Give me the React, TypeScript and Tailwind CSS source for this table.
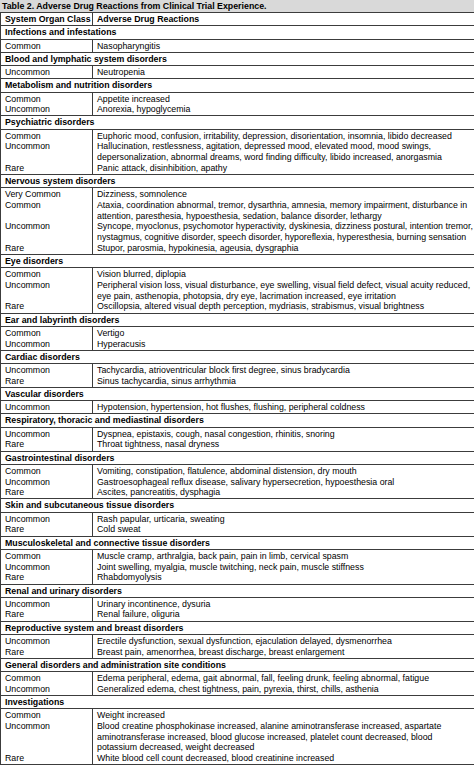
type Group = { freq: string; lines: string[] }
type Section = { title: string; groups: Group[] }

const sections: Section[] = [
  { title: "Infections and infestations", groups: [{ freq: "Common", lines: ["Nasopharyngitis"] }] },
  { title: "Blood and lymphatic system disorders", groups: [{ freq: "Uncommon", lines: ["Neutropenia"] }] },
  {
    title: "Metabolism and nutrition disorders",
    groups: [
      { freq: "Common", lines: ["Appetite increased"] },
      { freq: "Uncommon", lines: ["Anorexia, hypoglycemia"] },
    ],
  },
  {
    title: "Psychiatric disorders",
    groups: [
      { freq: "Common", lines: ["Euphoric mood, confusion, irritability, depression, disorientation, insomnia, libido decreased"] },
      {
        freq: "Uncommon",
        lines: [
          "Hallucination, restlessness, agitation, depressed mood, elevated mood, mood swings,",
          "depersonalization, abnormal dreams, word finding difficulty, libido increased, anorgasmia",
        ],
      },
      { freq: "Rare", lines: ["Panic attack, disinhibition, apathy"] },
    ],
  },
  {
    title: "Nervous system disorders",
    groups: [
      { freq: "Very Common", lines: ["Dizziness, somnolence"] },
      {
        freq: "Common",
        lines: [
          "Ataxia, coordination abnormal, tremor, dysarthria, amnesia, memory impairment, disturbance in",
          "attention, paresthesia, hypoesthesia, sedation, balance disorder, lethargy",
        ],
      },
      {
        freq: "Uncommon",
        lines: [
          "Syncope, myoclonus, psychomotor hyperactivity, dyskinesia, dizziness postural, intention tremor,",
          "nystagmus, cognitive disorder, speech disorder, hyporeflexia, hyperesthesia, burning sensation",
        ],
      },
      { freq: "Rare", lines: ["Stupor, parosmia, hypokinesia, ageusia, dysgraphia"] },
    ],
  },
  {
    title: "Eye disorders",
    groups: [
      { freq: "Common", lines: ["Vision blurred, diplopia"] },
      {
        freq: "Uncommon",
        lines: [
          "Peripheral vision loss, visual disturbance, eye swelling, visual field defect, visual acuity reduced,",
          "eye pain, asthenopia, photopsia, dry eye, lacrimation increased, eye irritation",
        ],
      },
      { freq: "Rare", lines: ["Oscillopsia, altered visual depth perception, mydriasis, strabismus, visual brightness"] },
    ],
  },
  {
    title: "Ear and labyrinth disorders",
    groups: [
      { freq: "Common", lines: ["Vertigo"] },
      { freq: "Uncommon", lines: ["Hyperacusis"] },
    ],
  },
  {
    title: "Cardiac disorders",
    groups: [
      { freq: "Uncommon", lines: ["Tachycardia, atrioventricular block first degree, sinus bradycardia"] },
      { freq: "Rare", lines: ["Sinus tachycardia, sinus arrhythmia"] },
    ],
  },
  {
    title: "Vascular disorders",
    groups: [{ freq: "Uncommon", lines: ["Hypotension, hypertension, hot flushes, flushing, peripheral coldness"] }],
  },
  {
    title: "Respiratory, thoracic and mediastinal disorders",
    groups: [
      { freq: "Uncommon", lines: ["Dyspnea, epistaxis, cough, nasal congestion, rhinitis, snoring"] },
      { freq: "Rare", lines: ["Throat tightness, nasal dryness"] },
    ],
  },
  {
    title: "Gastrointestinal disorders",
    groups: [
      { freq: "Common", lines: ["Vomiting, constipation, flatulence, abdominal distension, dry mouth"] },
      { freq: "Uncommon", lines: ["Gastroesophageal reflux disease, salivary hypersecretion, hypoesthesia oral"] },
      { freq: "Rare", lines: ["Ascites, pancreatitis, dysphagia"] },
    ],
  },
  {
    title: "Skin and subcutaneous tissue disorders",
    groups: [
      { freq: "Uncommon", lines: ["Rash papular, urticaria, sweating"] },
      { freq: "Rare", lines: ["Cold sweat"] },
    ],
  },
  {
    title: "Musculoskeletal and connective tissue disorders",
    groups: [
      { freq: "Common", lines: ["Muscle cramp, arthralgia, back pain, pain in limb, cervical spasm"] },
      { freq: "Uncommon", lines: ["Joint swelling, myalgia, muscle twitching, neck pain, muscle stiffness"] },
      { freq: "Rare", lines: ["Rhabdomyolysis"] },
    ],
  },
  {
    title: "Renal and urinary disorders",
    groups: [
      { freq: "Uncommon", lines: ["Urinary incontinence, dysuria"] },
      { freq: "Rare", lines: ["Renal failure, oliguria"] },
    ],
  },
  {
    title: "Reproductive system and breast disorders",
    groups: [
      { freq: "Uncommon", lines: ["Erectile dysfunction, sexual dysfunction, ejaculation delayed, dysmenorrhea"] },
      { freq: "Rare", lines: ["Breast pain, amenorrhea, breast discharge, breast enlargement"] },
    ],
  },
  {
    title: "General disorders and administration site conditions",
    groups: [
      { freq: "Common", lines: ["Edema peripheral, edema, gait abnormal, fall, feeling drunk, feeling abnormal, fatigue"] },
      { freq: "Uncommon", lines: ["Generalized edema, chest tightness, pain, pyrexia, thirst, chills, asthenia"] },
    ],
  },
  {
    title: "Investigations",
    groups: [
      { freq: "Common", lines: ["Weight increased"] },
      {
        freq: "Uncommon",
        lines: [
          "Blood creatine phosphokinase increased, alanine aminotransferase increased, aspartate",
          "aminotransferase increased, blood glucose increased, platelet count decreased, blood",
          "potassium decreased, weight decreased",
        ],
      },
      { freq: "Rare", lines: ["White blood cell count decreased, blood creatinine increased"] },
    ],
  },
]

function SectionBlock({ section }: { section: Section }) {
  return (
    <>
      <div className="border-b border-[#3c3c3c] pl-[4px] pt-[1px] pb-[0.5px] font-bold">{section.title}</div>
      <div className="grid grid-cols-[92px_1fr] border-b border-[#3c3c3c]">
        <div className="border-r border-[#3c3c3c] pl-[4px] pt-[1px] pb-[0.5px]">
          {section.groups.map((g) => (
            <div key={g.freq}>
              <div>{g.freq}</div>
              {g.lines.slice(1).map((_, i) => (
                <div key={i}>&nbsp;</div>
              ))}
            </div>
          ))}
        </div>
        <div className="pl-[4px] pt-[1px] pb-[0.5px]">
          {section.groups.map((g) =>
            g.lines.map((line, i) => (
              <div key={g.freq + i} className="whitespace-nowrap">
                {line}
              </div>
            )),
          )}
        </div>
      </div>
    </>
  )
}

export default function App() {
  return (
    <main className="w-[474px] h-[767px] overflow-hidden bg-white text-black text-[8.8px] leading-[10.72px] font-['Liberation_Sans',Arial,sans-serif]">
      <div className="bg-[#d9d9d9] border-b border-[#3c3c3c] pl-[2px] pt-[1px] pb-[0.5px] font-bold">
        Table 2. Adverse Drug Reactions from Clinical Trial Experience.
      </div>
      <div className="border-l border-[#3c3c3c]">
        <div className="grid grid-cols-[92px_1fr] border-b border-[#3c3c3c] font-bold">
          <div className="border-r border-[#3c3c3c] pl-[4px] pt-[1px] pb-[0.5px]">System Organ Class</div>
          <div className="pl-[4px] pt-[1px] pb-[0.5px]">Adverse Drug Reactions</div>
        </div>
        {sections.map((s) => (
          <SectionBlock key={s.title} section={s} />
        ))}
      </div>
    </main>
  )
}
